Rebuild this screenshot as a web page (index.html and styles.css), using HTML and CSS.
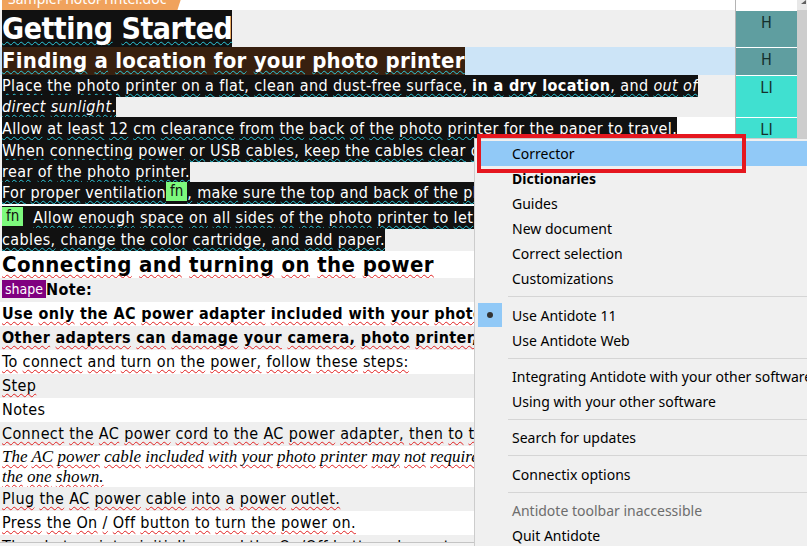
FILE: index.html
```html
<!DOCTYPE html>
<html lang="en">
<head>
  <meta charset="UTF-8" />
  <title>SamplePhotoPrinter.doc</title>
  <link rel="stylesheet" href="styles.css">
</head>
<body>
  <div class="screen">

    <div class="pane">
      <div class="row top">
        <div class="cell"><span class="tab">SamplePhotoPrinter.doc</span></div>
        <div class="tag blank"></div>
      </div>

      <div class="row r1 bg-grey">
        <div class="cell"><span class="blk h1 sq">Getting Started</span></div>
        <div class="tag t-h">H</div>
      </div>

      <div class="row r2 bg-lblue">
        <div class="cell"><span class="brn h2 sq">Finding a location for your photo printer</span></div>
        <div class="tag t-h">H</div>
      </div>

      <div class="row r3 bg-grey">
        <div class="cell para"><span class="blk sq">Place the photo printer on a flat, clean and dust-free surface, <b>in a dry location</b>, and <i>out of</i><br><i>direct sunlight</i>.</span></div>
        <div class="tag t-li">LI</div>
      </div>

      <div class="row r4 bg-white">
        <div class="cell para"><span class="blk sq">Allow at least 12 cm clearance from the back of the photo printer for the paper to travel.</span></div>
        <div class="tag t-li">LI</div>
      </div>

      <div class="row r5 bg-grey">
        <div class="cell para"><span class="blk sq">When connecting power or USB cables, keep the cables clear of the ventilation openings on the<br>rear of the photo printer.</span></div>
        <div class="tag t-li">LI</div>
      </div>

      <div class="row r6 bg-white">
        <div class="cell para"><span class="blk sq">For proper ventilation<span class="fn">fn</span>, make sure the top and back of the photo printer are unobstructed.</span></div>
        <div class="tag t-li">LI</div>
      </div>

      <div class="row r7 bg-grey">
        <div class="cell para"><span class="blk sq"><span class="fn">fn</span>&nbsp; Allow enough space on all sides of the photo printer to let you connect and disconnect<br>cables, change the color cartridge, and add paper.</span></div>
        <div class="tag t-li">FN</div>
      </div>

      <div class="row r8 bg-white">
        <div class="cell"><span class="h3 sq red">Connecting and turning on the power</span></div>
        <div class="tag t-h">H</div>
      </div>

      <div class="row line bg-grey">
        <div class="cell"><span class="shape">shape</span><b>Note:</b></div>
        <div class="tag t-li">P</div>
      </div>
      <div class="row line bg-white">
        <div class="cell"><b class="sq red">Use only the AC power adapter included with your photo printer.</b></div>
        <div class="tag t-li">P</div>
      </div>
      <div class="row line bg-grey">
        <div class="cell"><b class="sq red">Other adapters can damage your camera, photo printer, and AC adapter.</b></div>
        <div class="tag t-li">P</div>
      </div>
      <div class="row line bg-white">
        <div class="cell"><span class="sq red">To connect and turn on the power, follow these steps:</span></div>
        <div class="tag t-li">P</div>
      </div>
      <div class="row line bg-grey">
        <div class="cell"><span class="sq red">Step</span></div>
        <div class="tag t-li">TH</div>
      </div>
      <div class="row line bg-white">
        <div class="cell">Notes</div>
        <div class="tag t-li">TH</div>
      </div>
      <div class="row line bg-grey">
        <div class="cell"><span class="sq red">Connect the AC power cord to the AC power adapter, then to the photo printer.</span></div>
        <div class="tag t-li">TD</div>
      </div>
      <div class="row r16 bg-white">
        <div class="cell serif"><span class="sq red">The AC power cable included with your photo printer may not require the adapter plug or may look different from<br>the one shown.</span></div>
        <div class="tag t-li">TD</div>
      </div>
      <div class="row line bg-grey">
        <div class="cell"><span class="sq red">Plug the AC power cable into a power outlet.</span></div>
        <div class="tag t-li">TD</div>
      </div>
      <div class="row line bg-white">
        <div class="cell"><span class="sq red">Press the On / Off button to turn the power on.</span></div>
        <div class="tag t-li">TD</div>
      </div>
      <div class="row last bg-grey">
        <div class="cell"><span class="sq red">The photo printer initializes and the On/Off button glows steady green.</span></div>
        <div class="tag t-li">TD</div>
      </div>
      <div class="hscroll"></div>
    </div>

    <div class="scrollbar">
      <div class="scroll-top">
        <svg width="10" height="10" viewBox="0 0 10 10"><path d="M4 4 L9 0 L9 4 Z" fill="#606060"/></svg>
      </div>
    </div>

  </div>

  <div class="menu">
    <div class="item hot">Corrector</div>
    <div class="item"><b>Dictionaries</b></div>
    <div class="item">Guides</div>
    <div class="item">New document</div>
    <div class="item">Correct selection</div>
    <div class="item">Customizations</div>
    <div class="sep wide"></div>
    <div class="item checked"><span class="check"></span>Use Antidote 11</div>
    <div class="item">Use Antidote Web</div>
    <div class="sep"></div>
    <div class="item">Integrating Antidote with your other software</div>
    <div class="item">Using with your other software</div>
    <div class="sep"></div>
    <div class="item">Search for updates</div>
    <div class="sep wide"></div>
    <div class="item">Connectix options</div>
    <div class="sep"></div>
    <div class="item off">Antidote toolbar inaccessible</div>
    <div class="item">Quit Antidote</div>
  </div>

  <div class="callout"></div>

  <script>
    // wrap each word in a span so the squiggle skips the spaces
    document.querySelectorAll('.sq').forEach(function (el) {
      const walker = document.createTreeWalker(el, NodeFilter.SHOW_TEXT);
      const nodes = [];
      while (walker.nextNode()) nodes.push(walker.currentNode);
      nodes.forEach(function (node) {
        if (node.parentNode.classList.contains('fn')) return;
        const frag = document.createDocumentFragment();
        node.textContent.split(/(\s+)/).forEach(function (part) {
          if (!part) return;
          if (/^\s+$/.test(part)) {
            frag.appendChild(document.createTextNode(part));
            return;
          }
          const w = document.createElement('span');
          w.className = 'w';
          w.textContent = part;
          frag.appendChild(w);
        });
        node.parentNode.replaceChild(frag, node);
      });
    });
  </script>
</body>
</html>
```

FILE: styles.css
```css
* {
  margin: 0;
  padding: 0;
  box-sizing: border-box;
}

body {
  width: 807px;
  height: 546px;
  overflow: hidden;
  position: relative;
  background: #fff;
  color: #000;
  font-family: "DejaVu Sans Condensed", "DejaVu Sans", sans-serif;
  font-stretch: condensed;
  font-size: 16px;
  letter-spacing: 0.38px;
}

.screen { display: flex; height: 546px; }

.pane {
  width: 797px;
  display: flex;
  flex-direction: column;
}

.scrollbar { width: 10px; background: #cdcdcd; }
.scroll-top { height: 10px; background: #e8e8e8; }
.scroll-top svg { display: block; }

/* rows */
.row { display: flex; flex-shrink: 0; }
.cell {
  width: 736px;
  border-right: 1px solid #b4b4b4;
  padding-left: 2px;
  overflow: hidden;
  white-space: nowrap;
}
.tag {
  width: 61px;
  border-top: 1px solid #fff;
  text-align: center;
  color: #15302c;
  font-size: 16px;
  line-height: 20px;
  padding-top: 2px;
  letter-spacing: 0;
}
.tag.blank { border-top: 0; }
.t-h { background: #5f9ea0; }
.t-li { background: #40e0d0; }

.bg-grey .cell { background: #efefef; }
.bg-white .cell { background: #fff; }
.bg-lblue .cell { background: #cce4f7; }

.top { height: 10px; }
.top .cell {
  background: #fff;
  display: flex;
  align-items: flex-end;
}
.tab {
  flex-shrink: 0;
  height: 22px;
  padding: 0 18px 0 6px;
  background: #f0a25c;
  color: #fff;
  font-family: "Noto Sans", sans-serif;
  font-stretch: normal;
  font-size: 14px;
  line-height: 22px;
  letter-spacing: 0;
  clip-path: polygon(0 0, 100% 0, calc(100% - 7px) 100%, 0 100%);
}

.r1 { height: 37px; }
.r2 { height: 28px; }
.r3 { height: 42px; }
.r4 { height: 23px; }
.r5 { height: 42px; }
.r6 { height: 24px; }
.r6 .cell { border-bottom: 1px solid #fff; }
.r7 { height: 45px; }
.r8 { height: 27px; }
.line { height: 24px; line-height: 24px; }
.r16 { height: 41px; }
.last { flex: 1 1 0; min-height: 0; overflow: hidden; line-height: 24px; }

.para { line-height: 21px; }
.r4 .para { line-height: 23px; }
.r7 .para { line-height: 22px; padding-top: 1px; }

/* highlighted runs */
.blk {
  background: #111;
  color: #fff;
  padding: 2px 0;
}
.brn { background: #38200f; color: #fff; }

.h1 {
  display: inline-block;
  font-size: 30px;
  font-weight: bold;
  line-height: 37px;
  letter-spacing: -0.5px;
  padding: 0;
}
.h2 {
  display: inline-block;
  font-size: 22px;
  font-weight: bold;
  line-height: 28px;
  letter-spacing: 0.25px;
}
.h3 {
  font-size: 22px;
  font-weight: bold;
  line-height: 27px;
}

.serif {
  font-family: "Liberation Serif", serif;
  font-style: italic;
  font-size: 17px;
  line-height: 20px;
  letter-spacing: 0;
  padding-top: 1px;
}

.fn {
  display: inline-block;
  background: #7df97d;
  color: #111;
  font-size: 15px;
  line-height: 19px;
  letter-spacing: 0;
  padding: 0 4px;
  vertical-align: top;
}

.shape {
  display: inline-block;
  background: #800080;
  color: #fff;
  font-size: 14px;
  line-height: 18px;
  letter-spacing: 0;
  padding: 0 3px;
  margin-top: 2px;
  vertical-align: top;
}

/* spelling squiggles */
.sq .w {
  text-decoration: underline wavy #2cc9dc;
  text-decoration-thickness: 1px;
  text-underline-offset: 2px;
  text-decoration-skip-ink: none;
}
.sq.red .w { text-decoration-color: #e02020; }

.hscroll {
  height: 4px;
  border-top: 1px solid #c4c4c4;
  background: #f3f3f3;
  flex-shrink: 0;
}

/* context menu */
.menu {
  position: absolute;
  left: 474px;
  top: 138px;
  right: 0;
  bottom: 0;
  background: #f0f0f0;
  border-left: 1px solid #cccccc;
  border-top: 1px solid #cccccc;
  padding-top: 2px;
  font-family: "Noto Sans", sans-serif;
  font-size: 14px;
  letter-spacing: 0;
  color: #000;
  white-space: nowrap;
  overflow: hidden;
}
.item {
  position: relative;
  height: 25px;
  line-height: 25px;
  margin-left: 2px;
  padding-left: 35px;
}
.item.hot { background: #91c9f7; }
.item.off { color: #6d6d6d; }
.check {
  position: absolute;
  left: 1px;
  top: 0;
  width: 24px;
  height: 24px;
  background: #91c9f7;
}
.check::after {
  content: "";
  position: absolute;
  left: 9px;
  top: 9px;
  width: 6px;
  height: 6px;
  border-radius: 50%;
  background: #333;
}
.sep {
  height: 1px;
  margin: 5px 0 5px 33px;
  background: #d5d5d5;
}
.sep.wide { margin-bottom: 6px; }

.callout {
  position: absolute;
  left: 477px;
  top: 134px;
  width: 269px;
  height: 39px;
  border: 4px solid #e5171f;
}
```
